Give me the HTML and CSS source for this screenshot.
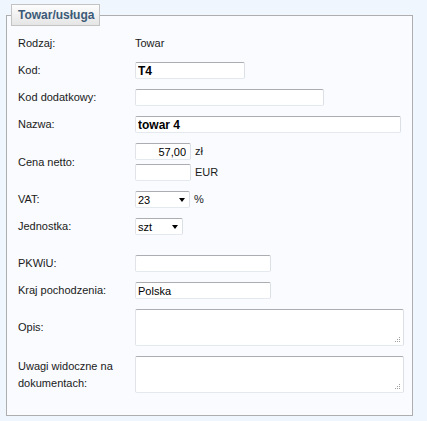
FILE: index.html
```html
<!DOCTYPE html>
<html lang="pl">
<head>
<meta charset="utf-8">
<title>Towar/usługa</title>
<link rel="stylesheet" href="styles.css">
</head>
<body>
<fieldset class="panel">
  <legend class="panel-title">Towar/usługa</legend>
  <div class="form">
    <div class="lbl">Rodzaj:</div>
    <div class="val">Towar</div>

    <label class="lbl" for="kod">Kod:</label>
    <div class="val"><input id="kod" class="inp inp-bold w-kod" value="T4"></div>

    <label class="lbl" for="kod2">Kod dodatkowy:</label>
    <div class="val"><input id="kod2" class="inp w-kod2" value=""></div>

    <label class="lbl" for="nazwa">Nazwa:</label>
    <div class="val"><input id="nazwa" class="inp inp-bold w-nazwa" value="towar 4"></div>

    <div class="lbl">Cena netto:</div>
    <div class="val price">
      <div class="price-row"><input class="inp inp-num w-price" value="57,00"><span class="unit">zł</span></div>
      <div class="price-row"><input class="inp inp-num w-price" value=""><span class="unit">EUR</span></div>
    </div>

    <label class="lbl" for="vat">VAT:</label>
    <div class="val price-row">
      <span class="sel w-vat"><select id="vat"><option>23</option></select></span><span class="unit">%</span>
    </div>

    <label class="lbl" for="jm">Jednostka:</label>
    <div class="val">
      <span class="sel w-jm"><select id="jm"><option>szt</option></select></span>
    </div>

    <div class="spacer"></div>

    <label class="lbl" for="pkwiu">PKWiU:</label>
    <div class="val"><input id="pkwiu" class="inp w-mid" value=""></div>

    <label class="lbl" for="kraj">Kraj pochodzenia:</label>
    <div class="val"><input id="kraj" class="inp w-mid" value="Polska"></div>

    <label class="lbl" for="opis">Opis:</label>
    <div class="val">
      <span class="ta"><textarea id="opis"></textarea><svg class="grip" width="5" height="5" viewBox="0 0 5 5"><rect x="4" y="0" width="1" height="1"/><rect x="2" y="2" width="1" height="1"/><rect x="4" y="2" width="1" height="1"/><rect x="0" y="4" width="1" height="1"/><rect x="2" y="4" width="1" height="1"/><rect x="4" y="4" width="1" height="1"/></svg></span>
    </div>

    <label class="lbl" for="uwagi">Uwagi widoczne na dokumentach:</label>
    <div class="val">
      <span class="ta"><textarea id="uwagi"></textarea><svg class="grip" width="5" height="5" viewBox="0 0 5 5"><rect x="4" y="0" width="1" height="1"/><rect x="2" y="2" width="1" height="1"/><rect x="4" y="2" width="1" height="1"/><rect x="0" y="4" width="1" height="1"/><rect x="2" y="4" width="1" height="1"/><rect x="4" y="4" width="1" height="1"/></svg></span>
    </div>
  </div>
</fieldset>
</body>
</html>
```

FILE: styles.css
```css
html, body {
  margin: 0;
  padding: 0;
  background: #eff6fe;
}

body {
  font-family: "Liberation Sans", Arial, sans-serif;
  font-size: 11px;
  color: #1a1a1a;
}

.panel {
  margin: 4px 14px 0 6px;
  padding: 0;
  border: 1px solid #aeaeae;
  background: #f9fbfe;
  min-width: 0;
}

.panel-title {
  margin-left: 4px;
  padding: 0 5px 0 6px;
  height: 22px;
  box-sizing: border-box;
  line-height: 20px;
  border: 1px solid #c3c3c3;
  background: linear-gradient(#fdfdfd, #e5e5e5);
  color: #3c5a78;
  font-weight: bold;
  font-size: 12px;
}

.form {
  display: grid;
  grid-template-columns: 117px 1fr;
  row-gap: 10px;
  align-items: center;
  padding: 9px 0 22px 11px;
}

.lbl {
  line-height: 17px;
  padding-right: 8px;
  color: #1a1a1a;
}

.val {
  line-height: 17px;
  min-height: 17px;
  display: flex;
  align-items: center;
}

.spacer {
  grid-column: 1 / -1;
  height: 0;
}

.inp {
  box-sizing: border-box;
  height: 17px;
  margin: 0;
  padding: 0 2px;
  border: 1px solid;
  border-color: #abadb3 #dbdfe6 #e3e9ef #e2e3ea;
  border-radius: 2px;
  background: #fff;
  font-family: "Liberation Sans", Arial, sans-serif;
  font-size: 11px;
  color: #000;
  outline: none;
}

.inp-bold {
  font-weight: bold;
  font-size: 12px;
}

.inp-num {
  text-align: right;
  padding-right: 4px;
}

.w-kod { width: 110px; }
.w-kod2 { width: 189px; }
.w-nazwa { width: 266px; }
.w-price { width: 56px; }
.w-mid { width: 136px; }

.price {
  flex-direction: column;
  align-items: flex-start;
  gap: 4px;
}

.price-row {
  display: flex;
  align-items: center;
  gap: 4px;
}

.unit {
  color: #1a1a1a;
}

.sel {
  position: relative;
  display: inline-block;
  height: 17px;
}

.sel select {
  appearance: none;
  -webkit-appearance: none;
  box-sizing: border-box;
  width: 100%;
  height: 17px;
  margin: 0;
  padding: 0 2px;
  border: 1px solid;
  border-color: #abadb3 #dbdfe6 #e3e9ef #e2e3ea;
  border-radius: 2px;
  background: #fff;
  font-family: "Liberation Sans", Arial, sans-serif;
  font-size: 11px;
  color: #000;
  outline: none;
}

.sel::after {
  content: "";
  position: absolute;
  right: 5px;
  top: 7px;
  border-left: 3.5px solid transparent;
  border-right: 3.5px solid transparent;
  border-top: 4px solid #000;
  pointer-events: none;
}

.w-vat { width: 55px; }
.w-jm { width: 48px; }

.ta {
  position: relative;
  display: inline-block;
  height: 37px;
}

.ta textarea {
  display: block;
  box-sizing: border-box;
  width: 269px;
  height: 37px;
  margin: 0;
  padding: 1px 2px;
  border: 1px solid;
  border-color: #abadb3 #dbdfe6 #e3e9ef #e2e3ea;
  border-radius: 2px;
  background: #fff;
  resize: none;
  font-family: "Liberation Sans", Arial, sans-serif;
  font-size: 11px;
  outline: none;
}

.grip {
  position: absolute;
  right: 4px;
  bottom: 4px;
  fill: #a0a0a0;
}
```
